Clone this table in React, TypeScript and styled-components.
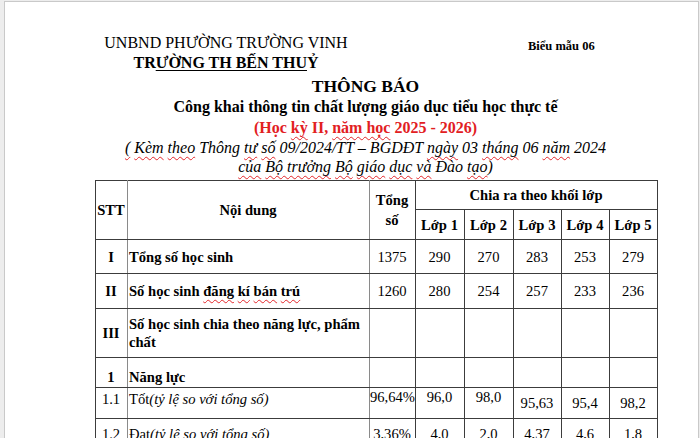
import React from "react";
import styled, { createGlobalStyle } from "styled-components";

const Global = createGlobalStyle`
  html, body { margin: 0; padding: 0; background: #ededed; overflow: hidden; }
  body { font-family: "Liberation Serif", "Times New Roman", serif; color: #000; }
`;

const Page = styled.div`
  margin: 1px 1px 0 4px;
  background: #fff;
  border: 1px solid #c9c9c9;
  border-bottom: none;
  height: 470px;
  box-sizing: border-box;
  padding: 31px 40px 0 90px;
`;

const Header = styled.div`
  display: flex;
  align-items: flex-start;
`;

const Agency = styled.div`
  width: 262px;
  display: flex;
  flex-direction: column;
  align-items: center;
  font-size: 16px;
  line-height: 20px;
  white-space: nowrap;
`;

const SchoolName = styled.div`
  font-weight: bold;
`;

const Underlined = styled.span`
  text-decoration: underline;
  text-decoration-thickness: 1px;
  text-underline-offset: 2px;
`;

const FormCode = styled.div`
  margin-left: 171px;
  margin-top: 3px;
  font-size: 12.5px;
  line-height: 20px;
  font-weight: bold;
  white-space: nowrap;
`;

const Titles = styled.div`
  display: flex;
  flex-direction: column;
  align-items: center;
  padding-right: 22px;
  white-space: nowrap;
`;

const Notice = styled.div`
  margin-top: 2px;
  font-weight: bold;
  font-size: 17.5px;
  line-height: 22px;
`;

const Subtitle = styled.div`
  font-weight: bold;
  font-size: 16px;
  line-height: 20px;
`;

const Term = styled.div`
  font-weight: bold;
  font-size: 16px;
  line-height: 21px;
  color: #e2201f;
`;

const Reference = styled.div<{ $lh: number }>`
  font-style: italic;
  font-size: 16px;
  line-height: ${(p) => p.$lh}px;
`;

const Spell = styled.span`
  text-decoration: underline wavy #e3262a;
  text-decoration-thickness: 1px;
  text-underline-offset: 3px;
  text-decoration-skip-ink: none;
`;

const Table = styled.table`
  margin-top: 3px;
  border-collapse: collapse;
  table-layout: fixed;
  width: 562px;
  font-size: 14.6px;
  line-height: 18px;
`;

const Row = styled.tr<{ $h: number }>`
  height: ${(p) => p.$h}px;
`;

type CellProps = {
  $left?: boolean;
  $bold?: boolean;
  $soft?: boolean;
  $top?: boolean;
  $pt?: number;
  $pb?: number;
};

const Cell = styled.td<CellProps>`
  border: 1px solid #3c3c3c;
  ${(p) => (p.$soft ? "border-right-color: #8a8a8a;" : "")}
  padding: ${(p) => p.$pt ?? 0}px ${(p) => (p.$left ? 0 : 1)}px ${(p) => p.$pb ?? 0}px
    ${(p) => (p.$left ? 1 : 0)}px;
  text-align: ${(p) => (p.$left ? "left" : "center")};
  vertical-align: ${(p) => (p.$top ? "top" : "middle")};
  font-weight: ${(p) => (p.$bold ? "bold" : "normal")};
  white-space: nowrap;
  overflow: visible;
`;

const HeadCell = styled(Cell).attrs({ as: "th" })`
  font-weight: bold;
`;

const TotalLabel = styled.div`
  line-height: 20px;
`;

const Note = styled.i``;

type DataRow = {
  stt: string;
  sttBold: boolean;
  content: React.ReactNode;
  contentBold: boolean;
  total: string;
  values: string[];
  h: number;
  pt?: number;
  pb?: number;
  topValues?: boolean[];
};

const rows: DataRow[] = [
  {
    stt: "I",
    sttBold: true,
    content: "Tổng số học sinh",
    contentBold: true,
    total: "1375",
    values: ["290", "270", "283", "253", "279"],
    h: 34,
  },
  {
    stt: "II",
    sttBold: true,
    content: (
      <>
        Số học sinh <Spell>đăng</Spell> <Spell>kí</Spell> <Spell>bán</Spell> <Spell>trú</Spell>
      </>
    ),
    contentBold: true,
    total: "1260",
    values: ["280", "254", "257", "233", "236"],
    h: 35,
  },
  {
    stt: "III",
    sttBold: true,
    content: (
      <>
        Số học sinh chia theo năng lực, phẩm
        <br />
        chất
      </>
    ),
    contentBold: true,
    total: "",
    values: ["", "", "", "", ""],
    h: 49,
  },
  {
    stt: "1",
    sttBold: true,
    content: "Năng lực",
    contentBold: true,
    total: "",
    values: ["", "", "", "", ""],
    h: 30,
    pt: 8,
  },
  {
    stt: "1.1",
    sttBold: false,
    content: (
      <>
        Tốt<Note>(tỷ lệ so với tổng số)</Note>
      </>
    ),
    contentBold: false,
    total: "96,64%",
    values: ["96,0", "98,0", "95,63", "95,4", "98,2"],
    h: 31,
    pb: 8,
    topValues: [true, true, false, false, false],
  },
  {
    stt: "1.2",
    sttBold: false,
    content: (
      <>
        Đạt<Note>(tỷ lệ so với tổng số)</Note>
      </>
    ),
    contentBold: false,
    total: "3,36%",
    values: ["4,0", "2,0", "4,37", "4,6", "1,8"],
    h: 31,
  },
];

const widths = [32, 242, 46, 49, 49, 48, 48, 48];

export default function App() {
  return (
    <>
      <Global />
      <Page>
        <Header>
          <Agency>
            <div>UNBND PHƯỜNG TRƯỜNG VINH</div>
            <SchoolName>
              TR<Underlined>ƯỜNG TH BẾN THU</Underlined>Ỷ
            </SchoolName>
          </Agency>
          <FormCode>Biểu mẫu 06</FormCode>
        </Header>
        <Titles>
          <Notice>THÔNG BÁO</Notice>
          <Subtitle>Công khai thông tin chất lượng giáo dục tiểu học thực tế</Subtitle>
          <Term>
            (Học <Spell>kỳ</Spell> II, <Spell>năm học</Spell> 2025 - 2026)
          </Term>
          <Reference $lh={19}>
            <Spell>(</Spell> <Spell>Kèm</Spell> <Spell>theo</Spell> Thông <Spell>tư</Spell>{" "}
            <Spell>số</Spell> 09/2024/TT – BGDĐT <Spell>ngày</Spell> 03 <Spell>tháng</Spell> 06{" "}
            <Spell>năm</Spell> 2024
          </Reference>
          <Reference $lh={20}>
            <Spell>của</Spell> <Spell>Bộ trưởng</Spell> <Spell>Bộ</Spell> <Spell>giáo</Spell>{" "}
            <Spell>dục</Spell> <Spell>và</Spell> Đào <Spell>tạo</Spell>)
          </Reference>
        </Titles>
        <Table>
          <colgroup>
            {widths.map((w, i) => (
              <col key={i} style={{ width: w }} />
            ))}
          </colgroup>
          <thead>
            <Row $h={29}>
              <HeadCell rowSpan={2} $soft>
                STT
              </HeadCell>
              <HeadCell rowSpan={2} $soft>
                Nội dung
              </HeadCell>
              <HeadCell rowSpan={2}>
                <TotalLabel>
                  Tổng
                  <br />
                  số
                </TotalLabel>
              </HeadCell>
              <HeadCell colSpan={5}>Chia ra theo khối lớp</HeadCell>
            </Row>
            <Row $h={30}>
              {[1, 2, 3, 4, 5].map((n) => (
                <HeadCell key={n}>Lớp {n}</HeadCell>
              ))}
            </Row>
          </thead>
          <tbody>
            {rows.map((r) => (
              <Row $h={r.h} key={r.stt}>
                <Cell $bold={r.sttBold} $soft $pt={r.pt} $pb={r.pb}>
                  {r.stt}
                </Cell>
                <Cell $left $bold={r.contentBold} $soft $pt={r.pt} $pb={r.pb}>
                  {r.content}
                </Cell>
                <Cell $top={!!r.topValues} $pt={r.pt}>
                  {r.total}
                </Cell>
                {r.values.map((v, i) => {
                  const top = r.topValues ? r.topValues[i] : false;
                  return (
                    <Cell key={i} $top={top} $pt={r.pt} $pb={top ? 0 : r.pb ? 0 : 0}>
                      {v}
                    </Cell>
                  );
                })}
              </Row>
            ))}
          </tbody>
        </Table>
      </Page>
    </>
  );
}
